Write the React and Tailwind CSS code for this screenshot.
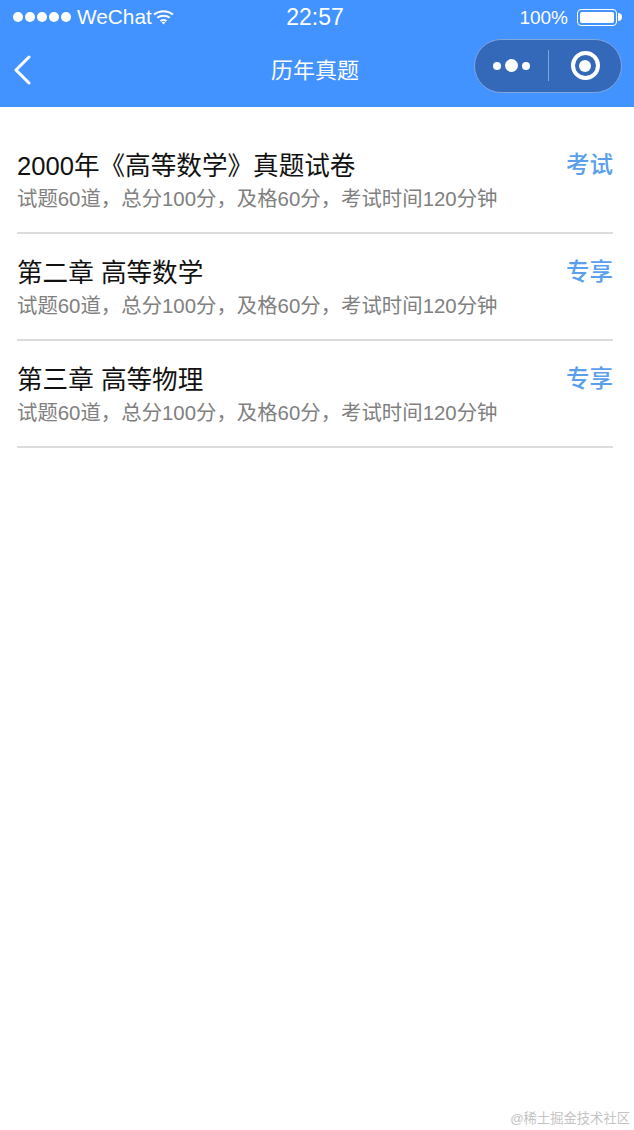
const cjk = "font-['Liberation_Sans','Noto_Sans_CJK_SC',sans-serif]";

const exams = [
  { title: "2000年《高等数学》真题试卷", action: "考试" },
  { title: "第二章 高等数学", action: "专享" },
  { title: "第三章 高等物理", action: "专享" },
];

const StatusBar = () => (
  <div className="flex h-[34px] items-center justify-between pl-[13px] pr-[12px] text-white">
    <div className="flex flex-1 items-center">
      <div className="flex gap-[2px]">
        {[0, 1, 2, 3, 4].map((i) => (
          <div key={i} className="h-[10px] w-[10px] rounded-full bg-white" />
        ))}
      </div>
      <span className="ml-[6px] text-[20.800px] leading-none">WeChat</span>
      <svg width="21" height="16" viewBox="0 0 21 16" fill="none" stroke="white" strokeWidth="2" className="ml-[1px]">
        <path d="M1 5.500C6.500 1 14.500 1 20 5.500" />
        <path d="M4.200 8.800C7.800 6 13.200 6 16.800 8.800" />
        <path d="M7.500 12C9.300 10.800 11.700 10.800 13.500 12" />
        <path d="M10.500 15.500L8.500 13.200C9.700 12.500 11.300 12.500 12.500 13.200Z" fill="white" stroke="none" />
      </svg>
    </div>
    <span className="mr-[5px] text-[23px] leading-none">22:57</span>
    <div className="flex flex-1 items-center justify-end">
      <span className="text-[19px] leading-none">100%</span>
      <div className="ml-[9px] flex h-[17px] w-[40px] items-center rounded-[4px] border border-white p-[2px]">
        <div className="h-full w-full rounded-[2px] bg-white" />
      </div>
      <div className="ml-[1px] h-[8px] w-[4px] rounded-r-full bg-white" />
    </div>
  </div>
);

const Capsule = () => (
  <div className="flex h-[54px] w-[148px] items-center rounded-full border border-[#7fa6de] bg-[#3369b8]">
    <div className="flex w-[73px] items-center justify-center gap-[4px]">
      <div className="h-[8px] w-[8px] rounded-full bg-white" />
      <div className="h-[13px] w-[13px] rounded-full bg-white" />
      <div className="h-[8px] w-[8px] rounded-full bg-white" />
    </div>
    <div className="h-[31px] w-px bg-[#7fa6de]" />
    <div className="flex flex-1 items-center justify-center">
      <div className="flex h-[29px] w-[29px] items-center justify-center rounded-full border-[4px] border-white">
        <div className="h-[12px] w-[12px] rounded-full bg-white" />
      </div>
    </div>
  </div>
);

const NavBar = () => (
  <div className="relative flex h-[73px] items-center justify-between pl-[13px] pr-[12px] text-white">
    <svg width="18" height="30" viewBox="0 0 18 30" fill="none" stroke="white" strokeWidth="3" strokeLinecap="round" strokeLinejoin="round" className="mb-[2px]">
      <path d="M16 2L3 15L16 28" />
    </svg>
    <span className="absolute left-0 right-[4px] text-center text-[22px] leading-none">历年真题</span>
    <div className="relative mb-[10px]">
      <Capsule />
    </div>
  </div>
);

const ExamRow = ({ exam }) => (
  <div className="flex h-[107px] items-start justify-between border-b-2 border-[#dcdcdc] pt-[22px]">
    <div>
      <div className="text-[25.600px] leading-[34px] text-[#111111]">{exam.title}</div>
      <div className="mt-[2px] text-[20.400px] leading-[28px] text-[#808080]">试题60道，总分100分，及格60分，考试时间120分钟</div>
    </div>
    <span className="text-[23.500px] font-medium leading-[32px] text-[#5a9fee]">{exam.action}</span>
  </div>
);

const App = () => {
  return (
    <div className={`relative flex h-[1130px] w-[634px] flex-col overflow-hidden bg-white ${cjk}`}>
      <div className="bg-[#4292ff]">
        <StatusBar />
        <NavBar />
      </div>
      <div className="pl-[17px] pr-[21px] pt-[20px]">
        {exams.map((exam) => (
          <ExamRow key={exam.title} exam={exam} />
        ))}
      </div>
      <span className="absolute bottom-[5px] right-[4px] text-[13.300px] leading-none text-[#c4c4c4]">@稀土掘金技术社区</span>
    </div>
  );
};

export default App;
